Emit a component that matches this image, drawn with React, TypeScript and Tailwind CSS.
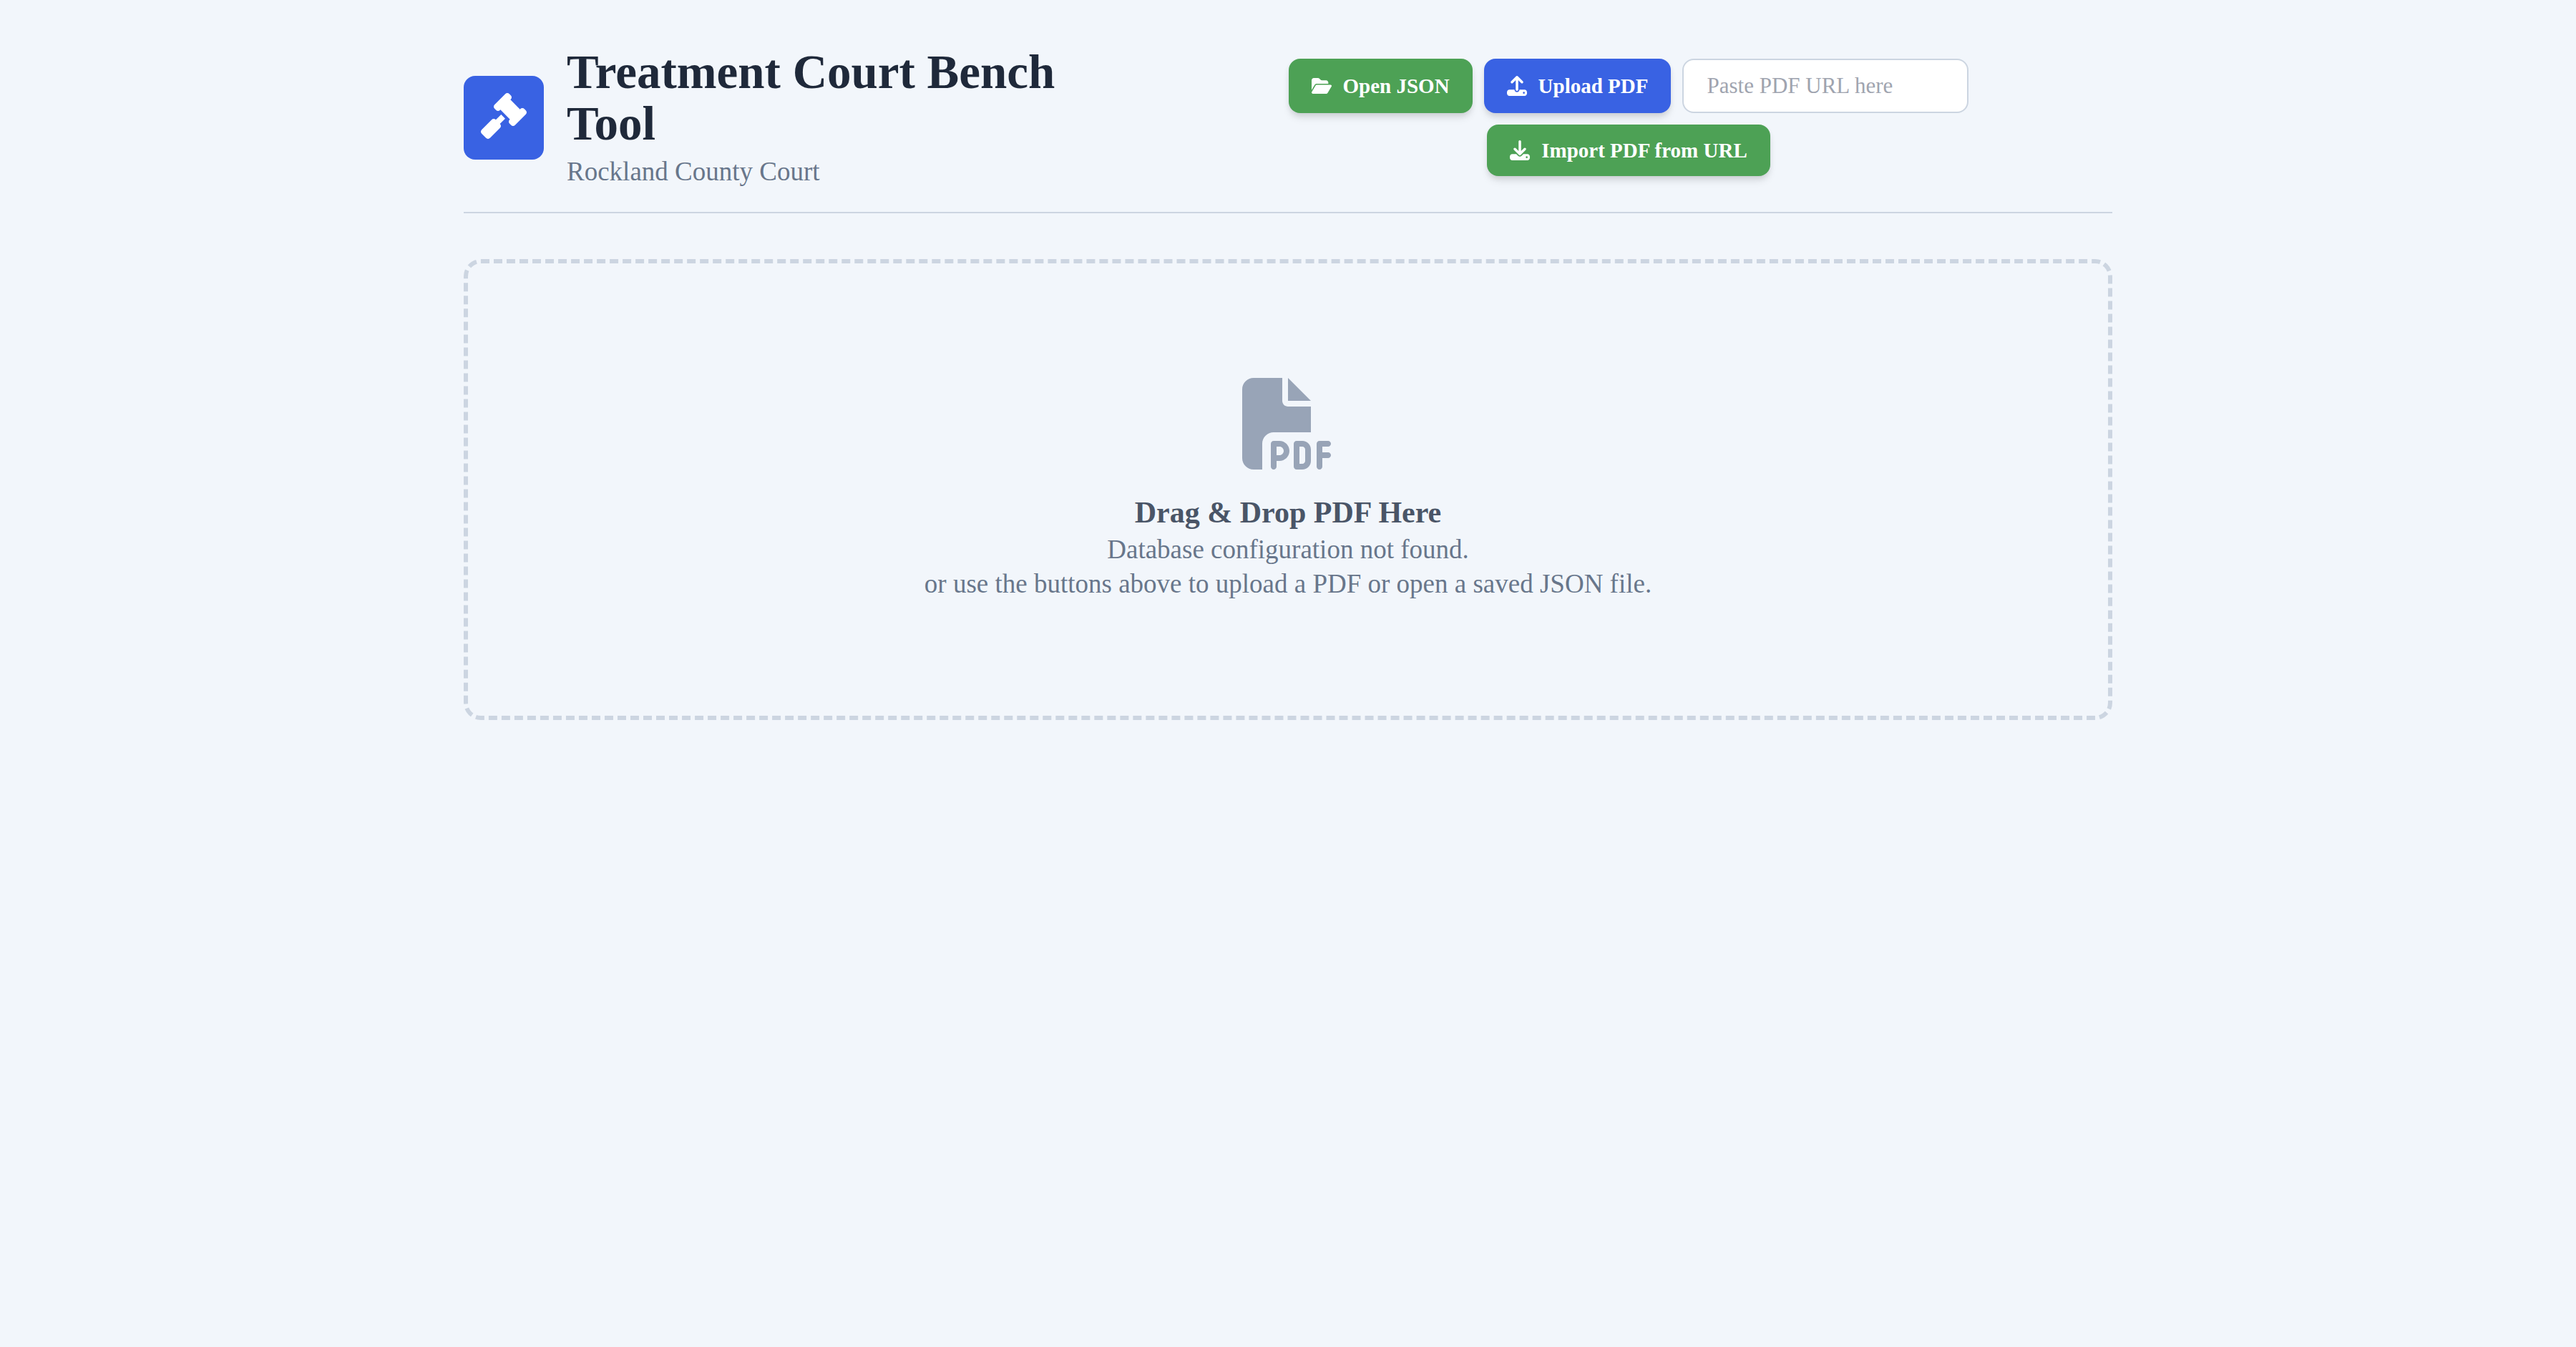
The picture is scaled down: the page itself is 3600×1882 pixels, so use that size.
import type { ReactNode } from "react";
import { FaDownload, FaFilePdf, FaFolderOpen, FaGavel, FaUpload } from "react-icons/fa6";

type ActionProps = { tone: "green" | "blue"; icon: ReactNode; label: string };

const tones = {
  green: "bg-[#4da155]",
  blue: "bg-[#3962e3]",
};

function ActionButton({ tone, icon, label }: ActionProps) {
  return (
    <button
      type="button"
      className={`flex items-center gap-4 rounded-2xl px-8 py-4 text-[29px] leading-10 font-bold whitespace-nowrap text-white shadow-[0_8px_12px_-2px_rgba(0,0,0,0.1),0_4px_8px_-2px_rgba(0,0,0,0.1)] ${tones[tone]}`}
    >
      <span className="text-[28px]">{icon}</span>
      {label}
    </button>
  );
}

export default function App() {
  return (
    <div className="min-h-screen bg-[#f2f6fb] px-16 py-16 font-['Liberation_Serif',serif]">
      <div className="mx-auto max-w-[2304px]">
        <header className="grid grid-cols-[119fr_169fr] items-center border-b-2 border-[#ccd5e1] pb-8">
          <div className="flex items-center gap-8">
            <div className="flex h-[117px] w-28 shrink-0 justify-center rounded-2xl bg-[#3962e3] pt-6 text-[64px] text-white">
              <FaGavel />
            </div>
            <div className="max-w-[760px]">
              <h1 className="text-[67px] leading-[72px] font-bold text-[#1f293a]">Treatment Court Bench Tool</h1>
              <p className="mt-2 text-[37px] leading-[48px] text-[#68768b]">Rockland County Court</p>
            </div>
          </div>
          <div className="flex flex-wrap justify-center gap-4 px-32">
            <ActionButton tone="green" icon={<FaFolderOpen className="w-auto" />} label="Open JSON" />
            <ActionButton tone="blue" icon={<FaUpload />} label="Upload PDF" />
            <input
              type="url"
              aria-label="PDF URL"
              placeholder="Paste PDF URL here"
              className="w-[400px] rounded-2xl border-2 border-[#ccd5e1] bg-white px-8 py-4 text-[31px] leading-10 placeholder:text-[#9fa4af]"
            />
            <ActionButton tone="green" icon={<FaDownload />} label="Import PDF from URL" />
          </div>
        </header>
        <main className="mt-16 flex flex-col items-center rounded-3xl border-[6px] border-dashed border-[#ccd5e1] py-40 text-center">
          <FaFilePdf className="text-[128px] text-[#98a4b7]" />
          <h2 className="mt-8 text-[42px] leading-[56px] font-bold text-[#4a5567]">Drag &amp; Drop PDF Here</h2>
          <p className="text-[37px] leading-[48px] text-[#68768b]">Database configuration not found.</p>
          <p className="text-[37px] leading-[48px] text-[#68768b]">
            or use the buttons above to upload a PDF or open a saved JSON file.
          </p>
        </main>
      </div>
    </div>
  );
}
